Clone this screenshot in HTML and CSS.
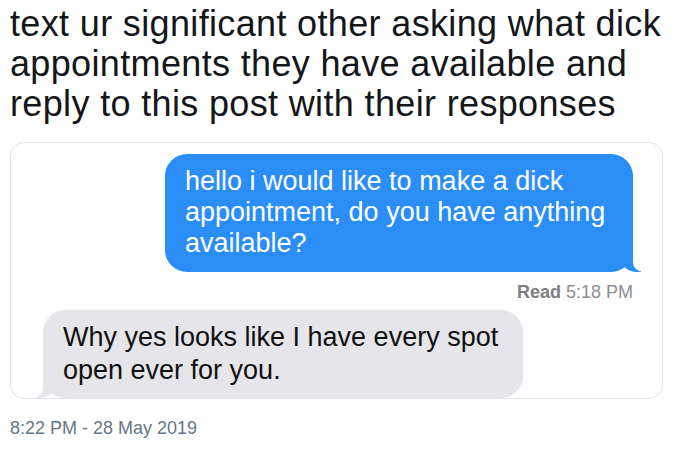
FILE: index.html
```html
<!DOCTYPE html>
<html lang="en">
<head>
  <meta charset="UTF-8" />
  <title>Tweet</title>
  <link rel="stylesheet" href="styles.css">
</head>
<body>
  <div class="tweet">
    <p class="tweet-text">text ur significant other asking what dick appointments they have available and reply to this post with their responses</p>

    <div class="chat">
      <div class="row row-sent">
        <div class="bubble sent">hello i would like to make a dick appointment, do you have anything available?</div>
      </div>
      <div class="receipt"><b>Read</b> 5:18 PM</div>
      <div class="row row-received">
        <div class="bubble received">Why yes looks like I have every spot open ever for you.</div>
      </div>
    </div>

    <div class="meta">8:22 PM - 28 May 2019</div>
  </div>
</body>
</html>
```

FILE: styles.css
```css
body {
  margin: 0;
  background-color: #ffffff;
  font-family: "Liberation Sans", Arial, sans-serif;
}

.tweet {
  padding: 4px 17px 0 10px;
}

.tweet-text {
  margin: 0 -10px 0 0;
  font-size: 36px;
  line-height: 40px;
  letter-spacing: 0.35px;
  color: #14171a;
}

.chat {
  margin-top: 18px;
  border: 1.5px solid #e1e4e8;
  border-radius: 14px;
  overflow: hidden;
  padding-top: 11px;
}

.row {
  display: flex;
}

.row-sent {
  justify-content: flex-end;
  padding-right: 29px;
}

.row-received {
  justify-content: flex-start;
  padding-left: 32px;
  margin-top: 7px;
}

.bubble {
  position: relative;
  max-width: 428px;
  padding: 12px 20px 13px;
  border-radius: 22px;
  font-size: 27px;
  line-height: 31px;
}

.sent {
  background-color: #2b8ef6;
  color: #ffffff;
}

.received {
  background-color: #e5e5ea;
  color: #111111;
  max-width: 440px;
  padding: 11px 20px;
  line-height: 33px;
}

/* bubble tails */
.sent::before,
.sent::after,
.received::before,
.received::after {
  content: "";
  position: absolute;
  bottom: 0;
  height: 24px;
}

.sent::before {
  right: -8px;
  width: 20px;
  background-color: #2b8ef6;
  border-bottom-left-radius: 16px 14px;
}

.sent::after {
  right: -26px;
  width: 26px;
  background-color: #ffffff;
  border-bottom-left-radius: 10px;
}

.received::before {
  left: -8px;
  width: 20px;
  background-color: #e5e5ea;
  border-bottom-right-radius: 16px 14px;
}

.received::after {
  left: -26px;
  width: 26px;
  background-color: #ffffff;
  border-bottom-right-radius: 10px;
}

.receipt {
  text-align: right;
  padding-right: 29px;
  margin-top: 9px;
  font-size: 18px;
  line-height: 22px;
  color: #8e8e93;
}

.receipt b {
  color: #7d7d82;
}

.meta {
  margin-top: 19px;
  font-size: 18px;
  color: #657786;
}
```
